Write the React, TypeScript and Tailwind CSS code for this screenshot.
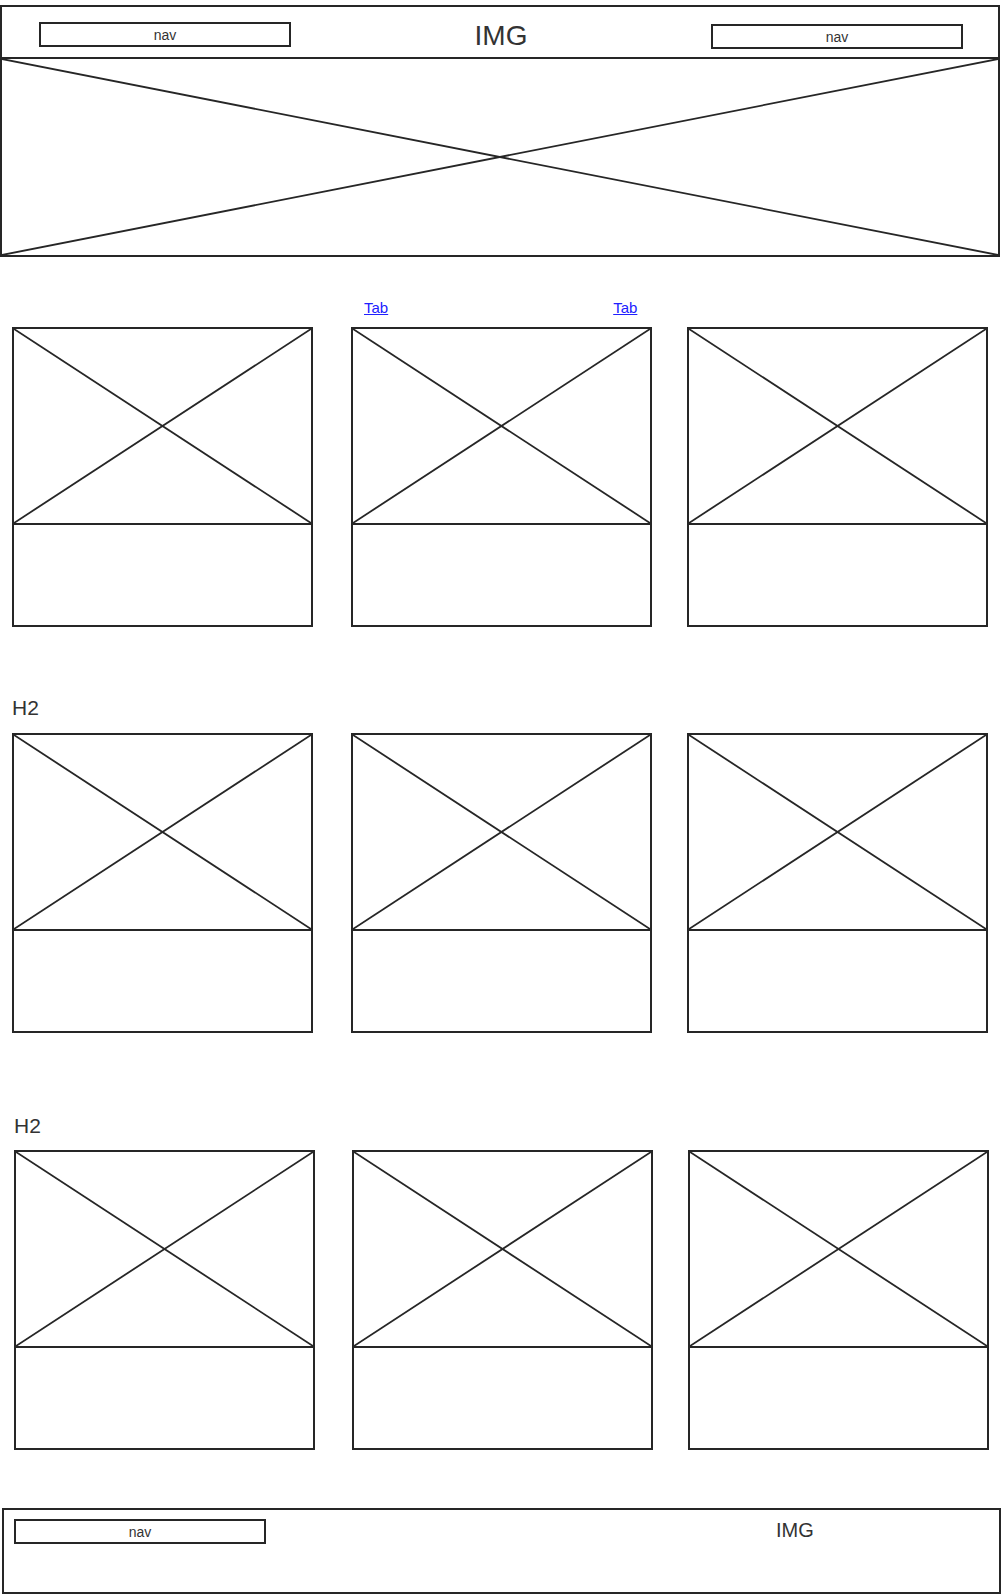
const font = { fontFamily: '"Liberation Sans", Arial, sans-serif' };

// wireframe placeholder: a box with a cross drawn corner to corner
const Cross = ({ className = "" }: { className?: string }) => (
  <div className={`relative ${className}`}>
    <svg
      className="absolute inset-0 h-full w-full"
      viewBox="0 0 100 100"
      preserveAspectRatio="none"
    >
      <line x1="0" y1="0" x2="100" y2="100" stroke="#262626" strokeWidth="1.8" vectorEffect="non-scaling-stroke" />
      <line x1="100" y1="0" x2="0" y2="100" stroke="#262626" strokeWidth="1.8" vectorEffect="non-scaling-stroke" />
    </svg>
  </div>
);

const Card = ({ className = "" }: { className?: string }) => (
  <div className={`flex h-[300px] w-[301px] shrink-0 flex-col border-2 border-[#262626] ${className}`}>
    <Cross className="h-[194px] w-full" />
    <div className="flex-1 border-t-2 border-[#262626]" />
  </div>
);

const NavBox = ({ className = "" }: { className?: string }) => (
  <div
    className={`flex h-[25px] w-[252px] shrink-0 items-center justify-center border-2 border-[#262626] text-[14px] leading-none text-[#333] ${className}`}
  >
    nav
  </div>
);

const Row = ({ pl, gaps }: { pl: string; gaps: [string, string] }) => (
  <div className={`flex ${pl}`}>
    <Card />
    <Card className={gaps[0]} />
    <Card className={gaps[1]} />
  </div>
);

export default function App() {
  return (
    <div className="w-[1003px] bg-white pt-[5px]" style={font}>
      {/* header + hero */}
      <div className="w-[1000px] border-2 border-[#262626]">
        <div className="flex h-[50px] items-start">
          <NavBox className="ml-[37px] mt-[15px]" />
          <div className="mt-[15px] flex-1 text-center text-[28px] leading-none text-[#333]">IMG</div>
          <NavBox className="mr-[35px] mt-[17px]" />
        </div>
        <Cross className="h-[198px] border-t-2 border-[#262626]" />
      </div>

      {/* tabs */}
      <div className="mt-[43px] flex h-[14px] text-[15px] leading-none">
        <a href="#" className="ml-[364px] text-[#2020ff] underline">Tab</a>
        <a href="#" className="ml-[225px] text-[#2020ff] underline">Tab</a>
      </div>

      <div className="mt-[13px]">
        <Row pl="pl-[12px]" gaps={["ml-[38px]", "ml-[35px]"]} />
      </div>

      <h2 className="ml-[12px] mt-[70px] text-[21px] font-normal leading-none text-[#333]">H2</h2>
      <div className="mt-[15px]">
        <Row pl="pl-[12px]" gaps={["ml-[38px]", "ml-[35px]"]} />
      </div>

      <h2 className="ml-[14px] mt-[82px] text-[21px] font-normal leading-none text-[#333]">H2</h2>
      <div className="mt-[14px]">
        <Row pl="pl-[14px]" gaps={["ml-[37px]", "ml-[35px]"]} />
      </div>

      {/* footer */}
      <div className="ml-[2px] mt-[58px] flex h-[86px] w-[999px] items-start border-2 border-[#262626]">
        <NavBox className="ml-[10px] mt-[9px]" />
        <div className="ml-[510px] mt-[10px] text-[20px] leading-none text-[#333]">IMG</div>
      </div>
    </div>
  );
}
